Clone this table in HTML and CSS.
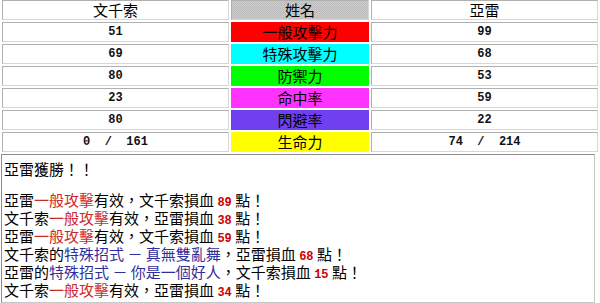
FILE: index.html
```html
<!DOCTYPE html>
<html lang="zh-Hant">
<head>
<meta charset="utf-8">
<title>對戰結果</title>
<link rel="stylesheet" href="styles.css">
</head>
<body>
<div class="stats">
  <div class="cell name">文千索</div>
  <div class="cell label head">姓名</div>
  <div class="cell name">亞雷</div>

  <div class="cell num">51</div>
  <div class="cell label red">一般攻擊力</div>
  <div class="cell num">99</div>

  <div class="cell num">69</div>
  <div class="cell label cyan">特殊攻擊力</div>
  <div class="cell num">68</div>

  <div class="cell num">80</div>
  <div class="cell label green">防禦力</div>
  <div class="cell num">53</div>

  <div class="cell num">23</div>
  <div class="cell label pink">命中率</div>
  <div class="cell num">59</div>

  <div class="cell num">80</div>
  <div class="cell label purple">閃避率</div>
  <div class="cell num">22</div>

  <div class="cell num">0  /  161</div>
  <div class="cell label yellow">生命力</div>
  <div class="cell num">74  /  214</div>
</div>

<div class="log">
  <div class="line">亞雷獲勝！！</div>
  <div class="lines">
    <div class="line">亞雷<span class="atk">一般攻擊</span>有效，文千索損血 <b class="dmg">89</b> 點！</div>
    <div class="line">文千索<span class="atk">一般攻擊</span>有效，亞雷損血 <b class="dmg">38</b> 點！</div>
    <div class="line">亞雷<span class="atk">一般攻擊</span>有效，文千索損血 <b class="dmg">59</b> 點！</div>
    <div class="line">文千索的<span class="sp">特殊招式 － 真無雙亂舞</span>，亞雷損血 <b class="dmg">68</b> 點！</div>
    <div class="line">亞雷的<span class="sp">特殊招式 － 你是一個好人</span>，文千索損血 <b class="dmg">15</b> 點！</div>
    <div class="line">文千索<span class="atk">一般攻擊</span>有效，亞雷損血 <b class="dmg">34</b> 點！</div>
  </div>
</div>
</body>
</html>
```

FILE: styles.css
```css
html, body {
  margin: 0;
  padding: 0;
  background: #ffffff;
}

body {
  width: 600px;
  height: 303px;
  overflow: hidden;
  font-family: "Noto Sans CJK TC", "Noto Sans", sans-serif;
  font-size: 15px;
  color: #000000;
}

.stats {
  display: grid;
  grid-template-columns: 227px 138px 227px;
  grid-auto-rows: 20px;
  gap: 2px;
  padding: 0 2px;
}

.cell {
  box-sizing: border-box;
  display: flex;
  align-items: center;
  justify-content: center;
  white-space: pre;
  border: 1px solid;
  border-color: #b0b0b0 #d6d6d6 #d6d6d6 #b0b0b0;
  background: #ffffff;
}

.name {
  font-size: 15px;
  line-height: 18px;
}

.num {
  font-family: "Liberation Mono", "DejaVu Sans Mono", monospace;
  font-weight: bold;
  font-size: 12px;
  color: #111111;
}

.label {
  font-size: 15px;
  line-height: 18px;
  border: none;
}

.head {
  background-color: #c4c4c4;
  background-image: repeating-conic-gradient(#bdbdbd 0 25%, #cbcbcb 0 50%);
  background-size: 2px 2px;
  border: 1px solid;
  border-color: #b0b0b0 #d6d6d6 #d6d6d6 #b0b0b0;
}

.red { background: #ff0000; }
.cyan { background: #00ffff; }
.green { background: #00ff00; }
.pink { background: #ff33ff; }
.purple { background: #7040f0; }
.yellow { background: #ffff00; }

.log {
  box-sizing: border-box;
  width: 594px;
  height: 149px;
  margin: 2px 0 0 1px;
  padding: 5px 1px 0 2px;
  border: 1px solid;
  border-color: #8c8c8c #c8c8c8 #c8c8c8 #8c8c8c;
  line-height: 18px;
}

.lines {
  margin-top: 13px;
}

.line {
  height: 18px;
  white-space: nowrap;
}

.atk {
  color: #cc2a2a;
}

.sp {
  color: #2f2f9c;
}

.dmg {
  font-family: "Liberation Mono", "DejaVu Sans Mono", monospace;
  font-size: 12px;
  line-height: 12px;
  font-weight: bold;
  color: #cc0000;
}
```
